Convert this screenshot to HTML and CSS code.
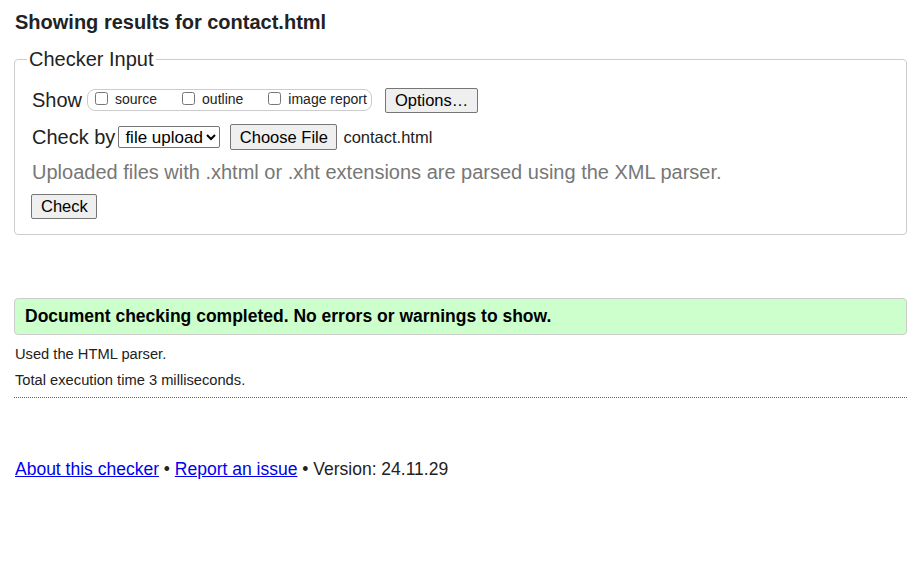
FILE: index.html
```html
<!DOCTYPE html>
<html lang="en">
<head>
<meta charset="utf-8">
<title>Showing results for contact.html - Nu Html Checker</title>
<link rel="stylesheet" href="styles.css">
</head>
<body>
<h2 class="title">Showing results for contact.html</h2>
<fieldset class="checker">
  <legend class="checker-legend">Checker Input</legend>
  <div class="row row-show">
    <span class="label">Show</span>
    <span class="show-box">
      <label class="opt"><input type="checkbox" class="cb">source</label>
      <label class="opt"><input type="checkbox" class="cb">outline</label>
      <label class="opt last"><input type="checkbox" class="cb">image report</label>
    </span>
    <button class="btn btn-options" type="button">Options…</button>
  </div>
  <div class="row row-check">
    <span class="label">Check by</span>
    <select class="sel"><option>file upload</option></select>
    <button class="btn btn-file" type="button">Choose File</button>
    <span class="filename">contact.html</span>
  </div>
  <div class="row row-note">
    <span class="note">Uploaded files with .xhtml or .xht extensions are parsed using the XML parser.</span>
  </div>
  <div class="row row-submit">
    <button class="btn btn-check" type="button">Check</button>
  </div>
</fieldset>
<div class="success">Document checking completed. No errors or warnings to show.</div>
<p class="details first">Used the HTML parser.</p>
<p class="details">Total execution time 3 milliseconds.</p>
<hr class="sep">
<p class="footer"><a href="#">About this checker</a> • <a href="#">Report an issue</a> • Version: 24.11.29</p>
</body>
</html>
```

FILE: styles.css
```css
html { background: #fff; }
body {
  margin: 0;
  padding: 0 16px 0 14px;
  font-family: "Liberation Sans", Arial, sans-serif;
  color: #222;
}
.title {
  margin: 0;
  padding: 11px 0 0 1px;
  font-size: 20px;
  line-height: 23px;
  font-weight: bold;
}
.checker {
  margin: 14px 0 0 0;
  padding: 14px 16px 15px 17px;
  border: 1px solid #ccc;
  border-radius: 4px;
  min-width: 0;
}
.checker-legend {
  margin-left: -5px;
  padding: 0 2px;
  font-size: 20px;
  line-height: 23px;
  color: #222;
}
.row {
  display: flex;
  align-items: center;
}
.row-show { height: 30px; }
.row-check { height: 30px; margin-top: 7px; }
.row-note { height: 24px; margin-top: 8px; }
.row-submit { height: 26px; margin-top: 9px; }
.label {
  font-size: 20px;
  line-height: 23px;
}
.show-box {
  display: flex;
  align-items: flex-start;
  box-sizing: border-box;
  height: 22px;
  margin-left: 5px;
  padding: 1px 4px 0 7px;
  border: 1px solid #ccc;
  border-radius: 8px;
}
.opt {
  display: flex;
  align-items: flex-start;
  font-size: 14px;
  line-height: 17px;
  margin-right: 25px;
}
.opt.last { margin-right: 0; }
.cb {
  width: 13px;
  height: 13px;
  margin: 1px 7px 0 0;
}
.btn {
  font-family: "Liberation Sans", Arial, sans-serif;
  font-size: 16.5px;
  color: #000;
  background: #efefef;
  border: 1px solid #767676;
  border-radius: 2px;
  box-sizing: border-box;
  padding: 0 9px;
  line-height: 20px;
  white-space: nowrap;
}
.btn-options { height: 25px; margin-left: 13px; width: 93px; }
.sel {
  font-family: "Liberation Sans", Arial, sans-serif;
  font-size: 17px;
  color: #000;
  width: 102px;
  height: 22px;
  margin-left: 3px;
  padding: 0 0 0 2px;
  border: 1px solid #767676;
  border-radius: 2px;
  background: #fff;
}
.btn-file { height: 26px; margin-left: 10px; width: 107px; padding: 0 6px; }
.filename {
  font-size: 16.5px;
  margin-left: 6px;
  color: #222;
}
.note {
  font-size: 20px;
  line-height: 24px;
  color: #777;
}
.btn-check { height: 25px; width: 66px; margin-left: -1px; }
.success {
  margin-top: 63px;
  box-sizing: border-box;
  height: 37px;
  padding: 0 10px;
  display: flex;
  align-items: center;
  background: #cfc;
  border: 1px solid #ccc;
  border-radius: 4px;
  font-size: 17.5px;
  font-weight: bold;
  color: #000;
}
.details {
  margin: 0;
  font-size: 14.7px;
  line-height: 16px;
  color: #222;
  padding-left: 1px;
}
.details.first { margin-top: 11px; }
.details + .details { margin-top: 10px; }
.sep {
  margin: 9px 0 0 0;
  border: 0;
  border-top: 1px dotted #666;
  height: 0;
}
.footer {
  margin: 61px 0 0 0;
  font-size: 17.5px;
  line-height: 20px;
  padding-left: 1px;
  color: #222;
}
.footer a { color: #00e; }
```
